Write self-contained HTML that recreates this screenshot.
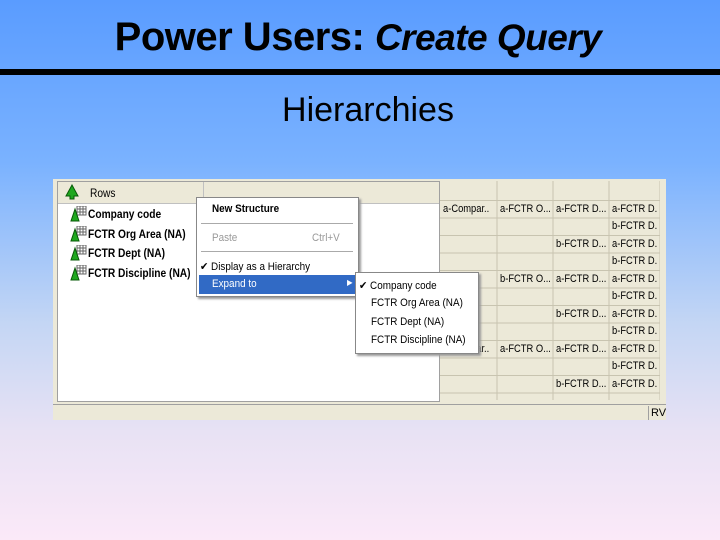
<!DOCTYPE html>
<html><head><style>
body{margin:0;width:720px;height:540px;overflow:hidden;background:linear-gradient(#5a9cff 0%,#7ab2ff 30%,#c4d6f4 60%,#e8e2f4 80%,#fbe9f8 100%);font-family:"Liberation Sans",sans-serif;position:relative}
.abs{position:absolute}
h1{position:absolute;left:0;width:720px;top:15px;margin:0;text-align:center;font-size:40px;font-weight:bold;letter-spacing:-0.5px;margin-left:-2px}
h1 i{font-size:37px}
.bar{left:0;top:69px;width:720px;height:6px;background:#000}
h2{position:absolute;left:0;width:720px;top:91px;margin:0;text-align:center;font-size:34px;font-weight:normal;margin-left:8px}
.win{left:53px;top:179px;width:613px;height:241px;background:#ece9d8}
.tree{left:57px;top:181px;width:381px;height:219px;background:#fff;border:1px solid #a0a0a0}
.hdr{left:0;top:0;width:381px;height:21px;background:#ece9d8;border-bottom:1px solid #c0c0c0}
.t{font-size:12px;font-weight:bold;transform:scaleX(.85);transform-origin:left;white-space:nowrap}
.grid{left:440px;top:181px;width:220px;height:219px;background:#ece9d8;overflow:hidden}
.gc{font-size:11px;white-space:nowrap;transform:scaleX(.85);transform-origin:left}
.menu{background:#fff;border:1px solid #888;box-shadow:2px 2px 2px #999;font-size:11px}
.m{position:absolute;white-space:nowrap;transform:scaleX(.9);transform-origin:left}
</style></head><body>
<h1>Power Users: <i>Create Query</i></h1>
<div class="abs bar"></div>
<h2>Hierarchies</h2>
<div class="abs win"></div>
<div class="abs tree">
 <div class="abs hdr"><div class="abs" style="left:145px;top:0;width:1px;height:21px;background:#c0c0c0"></div>
 <svg class="abs" style="left:6px;top:2px" width="16" height="16"><path d="M8 1L2 12H6V15H10V12H14Z" fill="#1fa81f" stroke="#075a07"/></svg>
 <div class="abs" style="left:32px;top:4px;font-size:12px;transform:scaleX(.85);transform-origin:left">Rows</div></div>
 <div class="abs" style="left:12px;top:24px">
  <div style="height:19.5px;position:relative"><svg class="abs" width="18" height="16"><rect x="7" y="0" width="9" height="9" fill="#fff" stroke="#666"/><path d="M10 0V9M13 0V9M7 3H16M7 6H16" stroke="#666"/><path d="M5 3L1 15H9Z" fill="#1fa81f" stroke="#075a07"/></svg><div class="abs t" style="left:18px;top:1px">Company code</div></div>
  <div style="height:19.5px;position:relative"><svg class="abs" width="18" height="16"><rect x="7" y="0" width="9" height="9" fill="#fff" stroke="#666"/><path d="M10 0V9M13 0V9M7 3H16M7 6H16" stroke="#666"/><path d="M5 3L1 15H9Z" fill="#1fa81f" stroke="#075a07"/></svg><div class="abs t" style="left:18px;top:1px">FCTR Org Area (NA)</div></div>
  <div style="height:19.5px;position:relative"><svg class="abs" width="18" height="16"><rect x="7" y="0" width="9" height="9" fill="#fff" stroke="#666"/><path d="M10 0V9M13 0V9M7 3H16M7 6H16" stroke="#666"/><path d="M5 3L1 15H9Z" fill="#1fa81f" stroke="#075a07"/></svg><div class="abs t" style="left:18px;top:1px">FCTR Dept (NA)</div></div>
  <div style="height:19.5px;position:relative"><svg class="abs" width="18" height="16"><rect x="7" y="0" width="9" height="9" fill="#fff" stroke="#666"/><path d="M10 0V9M13 0V9M7 3H16M7 6H16" stroke="#666"/><path d="M5 3L1 15H9Z" fill="#1fa81f" stroke="#075a07"/></svg><div class="abs t" style="left:18px;top:1px">FCTR Discipline (NA)</div></div>
 </div>
</div>
<div class="abs grid">
<svg class="abs" width="220" height="219" style="left:0;top:0">
<g stroke="#c8c4b0"><path d="M57 0V219M113 0V219M169 0V219M220 0V219"/>
<path d="M0 19.5H220M0 37H220M0 54.5H220M0 72H220M0 89.5H220M0 107H220M0 124.5H220M0 142H220M0 159.5H220M0 177H220M0 194.5H220M0 212H220"/></g></svg>
<div class="abs gc" style="left:3px;top:22px">a-Compar..</div><div class="abs gc" style="left:60px;top:22px">a-FCTR O...</div><div class="abs gc" style="left:116px;top:22px">a-FCTR D...</div><div class="abs gc" style="left:172px;top:22px">a-FCTR D.</div>
<div class="abs gc" style="left:172px;top:39px">b-FCTR D.</div>
<div class="abs gc" style="left:116px;top:57px">b-FCTR D...</div><div class="abs gc" style="left:172px;top:57px">a-FCTR D.</div>
<div class="abs gc" style="left:172px;top:74px">b-FCTR D.</div>
<div class="abs gc" style="left:60px;top:92px">b-FCTR O...</div><div class="abs gc" style="left:116px;top:92px">a-FCTR D...</div><div class="abs gc" style="left:172px;top:92px">a-FCTR D.</div>
<div class="abs gc" style="left:172px;top:109px">b-FCTR D.</div>
<div class="abs gc" style="left:116px;top:127px">b-FCTR D...</div><div class="abs gc" style="left:172px;top:127px">a-FCTR D.</div>
<div class="abs gc" style="left:172px;top:144px">b-FCTR D.</div>
<div class="abs gc" style="left:3px;top:162px">b-Compar..</div><div class="abs gc" style="left:60px;top:162px">a-FCTR O...</div><div class="abs gc" style="left:116px;top:162px">a-FCTR D...</div><div class="abs gc" style="left:172px;top:162px">a-FCTR D.</div>
<div class="abs gc" style="left:172px;top:179px">b-FCTR D.</div>
<div class="abs gc" style="left:116px;top:197px">b-FCTR D...</div><div class="abs gc" style="left:172px;top:197px">a-FCTR D.</div>
</div>
<div class="abs" style="left:53px;top:404px;width:613px;height:1px;background:#a0a0a0"></div>
<div class="abs" style="left:648px;top:406px;width:1px;height:14px;background:#a0a0a0"></div>
<div class="abs" style="left:651px;top:407px;font-size:11px">RV</div>
<div class="abs menu" style="left:196px;top:197px;width:161px;height:98px">
 <div class="m" style="left:15px;top:5px;font-weight:bold">New Structure</div>
 <div class="abs" style="left:4px;top:25px;width:152px;height:1px;background:#aaa"></div>
 <div class="m" style="left:15px;top:34px;color:#999">Paste</div><div class="m" style="left:115px;top:34px;color:#999">Ctrl+V</div>
 <div class="abs" style="left:4px;top:53px;width:152px;height:1px;background:#aaa"></div>
 <div class="m" style="left:3px;top:62px">✔ Display as a Hierarchy</div>
 <div class="abs" style="left:2px;top:77px;width:157px;height:19px;background:#316ac5"></div>
 <div class="m" style="left:15px;top:80px;color:#fff">Expand to</div><div class="m" style="left:150px;top:80px;color:#fff;font-size:8px">▶</div>
</div>
<div class="abs menu" style="left:355px;top:272px;width:122px;height:80px">
 <div class="m" style="left:3px;top:6px">✔ Company code</div>
 <div class="m" style="left:15px;top:24px">FCTR Org Area (NA)</div>
 <div class="m" style="left:15px;top:43px">FCTR Dept (NA)</div>
 <div class="m" style="left:15px;top:61px">FCTR Discipline (NA)</div>
</div>
</body></html>
